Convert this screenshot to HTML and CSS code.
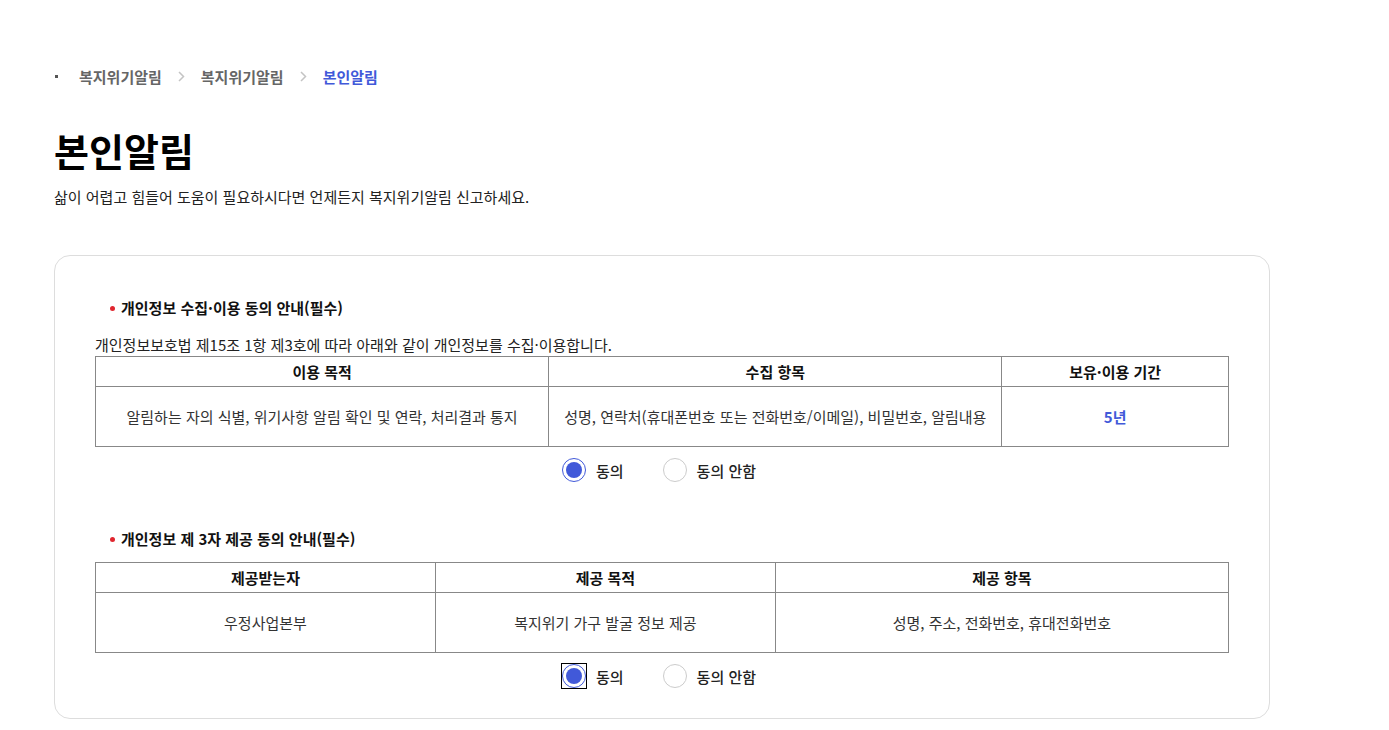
FILE: index.html
```html
<!DOCTYPE html>
<html lang="ko">
<head>
    <meta charset="UTF-8">
    <meta name="viewport" content="width=device-width, initial-scale=1.0">
    <title>본인알림</title>
    <link rel="stylesheet" href="styles.css">
</head>
<body>
    <div class="wrap">
        <nav class="breadcrumb">
            <span class="home-dot"></span>
            <span class="crumb">복지위기알림</span>
            <svg class="sep" width="7" height="11" viewBox="0 0 7 11"><path d="M1 1l4.5 4.5L1 10" fill="none" stroke="#c4c4c4" stroke-width="1.5"/></svg>
            <span class="crumb">복지위기알림</span>
            <svg class="sep" width="7" height="11" viewBox="0 0 7 11"><path d="M1 1l4.5 4.5L1 10" fill="none" stroke="#c4c4c4" stroke-width="1.5"/></svg>
            <span class="crumb current">본인알림</span>
        </nav>

        <h1 class="page-title">본인알림</h1>
        <p class="page-desc">삶이 어렵고 힘들어 도움이 필요하시다면 언제든지 복지위기알림 신고하세요.</p>

        <div class="card">
            <section class="agree-block">
                <h3 class="agree-title">개인정보 수집·이용 동의 안내(필수)</h3>
                <p class="agree-text">개인정보보호법 제15조 1항 제3호에 따라 아래와 같이 개인정보를 수집·이용합니다.</p>
                <table class="info-table">
                    <colgroup>
                        <col style="width: 40%">
                        <col style="width: 40%">
                        <col style="width: 20%">
                    </colgroup>
                    <thead>
                        <tr>
                            <th>이용 목적</th>
                            <th>수집 항목</th>
                            <th>보유·이용 기간</th>
                        </tr>
                    </thead>
                    <tbody>
                        <tr>
                            <td>알림하는 자의 식별, 위기사항 알림 확인 및 연락, 처리결과 통지</td>
                            <td>성명, 연락처(휴대폰번호 또는 전화번호/이메일), 비밀번호, 알림내용</td>
                            <td class="period">5년</td>
                        </tr>
                    </tbody>
                </table>
                <div class="radio-row">
                    <label class="radio"><span class="dot checked"></span>동의</label>
                    <label class="radio"><span class="dot"></span>동의 안함</label>
                </div>
            </section>

            <section class="agree-block second">
                <h3 class="agree-title">개인정보 제 3자 제공 동의 안내(필수)</h3>
                <table class="info-table">
                    <colgroup>
                        <col style="width: 30%">
                        <col style="width: 30%">
                        <col style="width: 40%">
                    </colgroup>
                    <thead>
                        <tr>
                            <th>제공받는자</th>
                            <th>제공 목적</th>
                            <th>제공 항목</th>
                        </tr>
                    </thead>
                    <tbody>
                        <tr>
                            <td>우정사업본부</td>
                            <td>복지위기 가구 발굴 정보 제공</td>
                            <td>성명, 주소, 전화번호, 휴대전화번호</td>
                        </tr>
                    </tbody>
                </table>
                <div class="radio-row">
                    <label class="radio"><span class="dot checked focused"></span>동의</label>
                    <label class="radio"><span class="dot"></span>동의 안함</label>
                </div>
            </section>
        </div>
    </div>
</body>
</html>
```

FILE: styles.css
```css
body {
    margin: 0;
    padding: 0;
    font-family: "Noto Sans CJK KR", "Noto Sans", sans-serif;
    color: #222;
    background: #fff;
}

.wrap {
    width: 1216px;
    padding-left: 54px;
}

/* breadcrumb */
.breadcrumb {
    display: flex;
    align-items: center;
    height: 20px;
    margin-top: 66px;
    font-size: 15px;
    font-weight: 700;
    color: #666;
}

.home-dot {
    width: 3px;
    height: 3px;
    background: #555;
    margin: 0 21px 0 1px;
}

.sep {
    margin: 0 16px 0 16px;
}

.crumb.current {
    color: #4159d9;
}

.page-title {
    margin: 36px 0 0;
    font-size: 38px;
    line-height: 56px;
    font-weight: 700;
    color: #000;
}

.page-desc {
    margin: 7px 0 0;
    font-size: 15px;
    line-height: 24px;
    color: #222;
}

/* card */
.card {
    margin-top: 46px;
    border: 1px solid #ddd;
    border-radius: 16px;
    padding: 40px 40px 17px;
}

.agree-title {
    margin: 0 0 0 15px;
    font-size: 15px;
    line-height: 24px;
    font-weight: 700;
    color: #111;
    position: relative;
    padding-left: 11px;
}

.agree-title::before {
    content: "";
    position: absolute;
    left: 0;
    top: 10px;
    width: 5px;
    height: 5px;
    border-radius: 50%;
    background: #e0262f;
}

.agree-text {
    margin: 14px 0 0;
    font-size: 15px;
    line-height: 22px;
    color: #222;
}

.second .agree-title {
    margin-bottom: 11px;
}

.info-table {
    width: 100%;
    border-collapse: collapse;
    table-layout: fixed;
    font-size: 15px;
}

.info-table th,
.info-table td {
    border: 1px solid #888;
    text-align: center;
    padding: 0 8px;
}

.info-table th {
    height: 29px;
    font-weight: 700;
    color: #111;
}

.info-table td {
    height: 59px;
    color: #333;
}

.info-table td.period {
    color: #4159d9;
    font-weight: 700;
}

/* radios */
.radio-row {
    display: flex;
    justify-content: center;
    gap: 39px;
    padding: 10px 6px 0 0;
    height: 38px;
}

.radio {
    display: flex;
    align-items: center;
    height: 26px;
    font-size: 15px;
    font-weight: 500;
    color: #222;
}

.dot {
    width: 22px;
    height: 22px;
    border: 1px solid #ccc;
    border-radius: 50%;
    margin-right: 10px;
    position: relative;
}

.dot.checked {
    border-color: #4159d9;
}

.dot.checked::after {
    content: "";
    position: absolute;
    left: 3px;
    top: 3px;
    width: 16px;
    height: 16px;
    border-radius: 50%;
    background: #4159d9;
}

.dot.focused::before {
    content: "";
    position: absolute;
    left: -2px;
    top: -2px;
    width: 24px;
    height: 24px;
    border: 1px solid #000;
}

.agree-block.second {
    margin-top: 32px;
}
```
